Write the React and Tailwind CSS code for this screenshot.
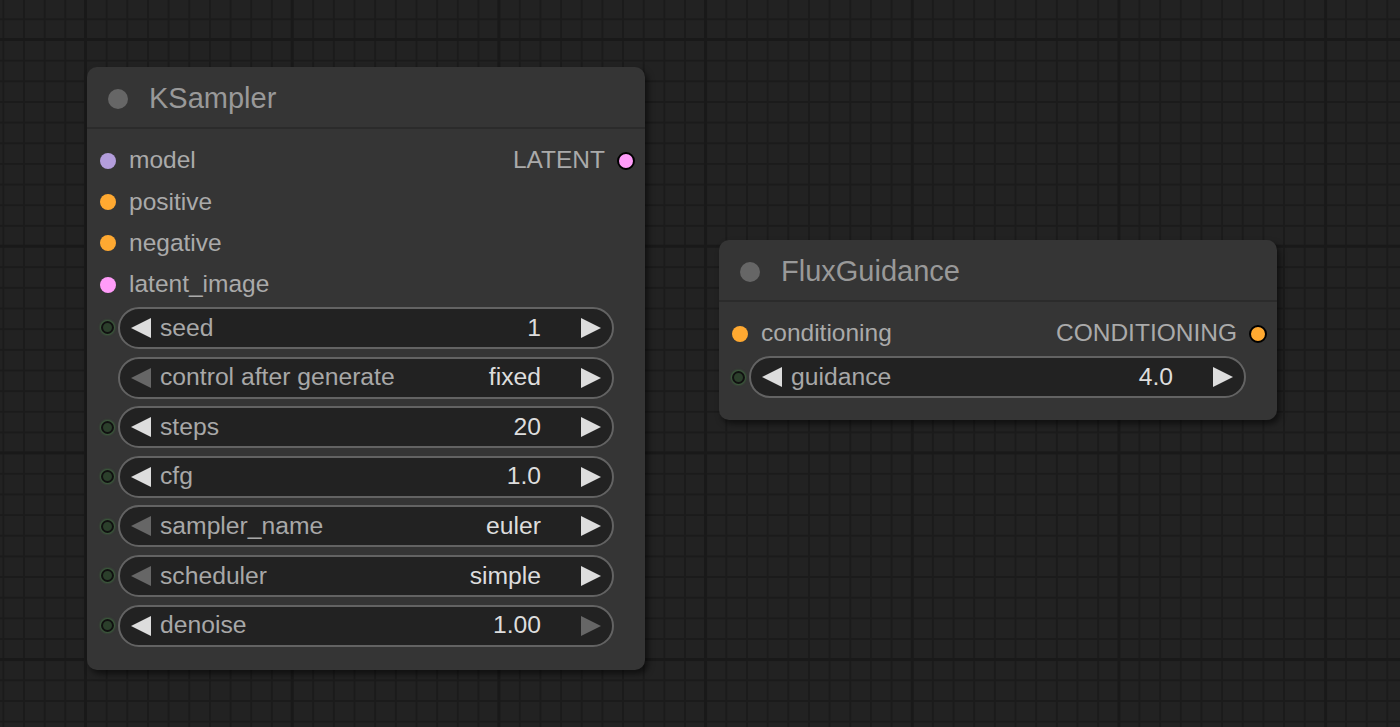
import React from 'react'

const font = { fontFamily: '"Liberation Sans", Arial, sans-serif' }

const ksInputs = [
  { name: 'model', color: 'bg-[#b39ddb]' },
  { name: 'positive', color: 'bg-[#ffa931]' },
  { name: 'negative', color: 'bg-[#ffa931]' },
  { name: 'latent_image', color: 'bg-[#ff9cf9]' },
]

const ksWidgets = [
  { name: 'seed', value: '1', dot: true, left: true, right: true },
  { name: 'control after generate', value: 'fixed', dot: false, left: false, right: true },
  { name: 'steps', value: '20', dot: true, left: true, right: true },
  { name: 'cfg', value: '1.0', dot: true, left: true, right: true },
  { name: 'sampler_name', value: 'euler', dot: true, left: false, right: true },
  { name: 'scheduler', value: 'simple', dot: true, left: false, right: true },
  { name: 'denoise', value: '1.00', dot: true, left: true, right: false },
]

function Arrow({ dir, active }) {
  return (
    <svg width="20" height="20" viewBox="0 0 20 20" className="shrink-0">
      <polygon
        points={dir === 'left' ? '20,0 20,20 0,10' : '0,0 0,20 20,10'}
        fill={active ? '#dddddd' : '#666666'}
      />
    </svg>
  )
}

function Widget({ w }) {
  return (
    <div className="relative h-[49.6px] flex items-center">
      {w.dot && (
        <div className="absolute left-[-17px] w-[13px] h-[13px] rounded-full border-2 border-[#111] bg-[#2b3f2b] shadow-[0_0_2px_1px_rgba(70,150,70,0.5)]" />
      )}
      <div className="w-full h-[42px] rounded-full border-2 border-[#636363] bg-[#222222] flex items-center pl-[11px] pr-[11px]">
        <Arrow dir="left" active={w.left} />
        <span className="ml-[9px] text-[24.7px] leading-none text-[#a8a8a8]">{w.name}</span>
        <span className="ml-auto text-[24.7px] leading-none text-[#dddddd]">{w.value}</span>
        <div className="ml-[40px]">
          <Arrow dir="right" active={w.right} />
        </div>
      </div>
    </div>
  )
}

function InputRow({ name, color, output }) {
  return (
    <div className="h-[41.3px] flex items-center">
      <div className={`w-4 h-4 rounded-full ${color} ml-[13px]`} />
      <span className="ml-[13px] text-[24.5px] leading-none text-[#aaaaaa]">{name}</span>
      {output && (
        <div className="ml-auto flex items-center mr-[10px]">
          <span className="text-[24.5px] leading-none text-[#aaaaaa]">{output.name}</span>
          <div className={`ml-[12px] w-[18px] h-[18px] rounded-full border-2 border-black ${output.color}`} />
        </div>
      )}
    </div>
  )
}

function Node({ title, className, children }) {
  return (
    <div
      className={`absolute w-[558px] rounded-[10px] bg-[#353535] shadow-[3px_4px_6px_rgba(0,0,0,0.55)] ${className}`}
    >
      <div className="h-[62px] pt-[3px] flex items-center border-b-2 border-[#2b2b2b]">
        <div className="ml-[21px] w-5 h-5 rounded-full bg-[#666666]" />
        <span className="ml-[21px] text-[29px] leading-none text-[#999999]">{title}</span>
      </div>
      {children}
    </div>
  )
}

export default function App() {
  return (
    <div
      style={font}
      className="relative w-[1400px] h-[727px] overflow-hidden bg-[#222222] bg-[linear-gradient(90deg,#191919_3px,transparent_3px),linear-gradient(#191919_3px,transparent_3px),linear-gradient(90deg,#1b1b1b_2px,transparent_2px),linear-gradient(#1b1b1b_2px,transparent_2px)] [background-size:206.7px_206.7px,206.7px_206.7px,20.67px_20.67px,20.67px_20.67px] [background-position:84px_38px,84px_38px,85px_39px,85px_39px]"
    >
      <Node title="KSampler" className="left-[87px] top-[67px] h-[603px]">
        <div className="pt-[11px]">
          {ksInputs.map((inp, i) => (
            <InputRow
              key={inp.name}
              name={inp.name}
              color={inp.color}
              output={i === 0 ? { name: 'LATENT', color: 'bg-[#ff9cf9]' } : null}
            />
          ))}
        </div>
        <div className="mt-[-2px] ml-[31px] mr-[31px]">
          {ksWidgets.map((w) => (
            <Widget key={w.name} w={w} />
          ))}
        </div>
      </Node>

      <Node title="FluxGuidance" className="left-[719px] top-[240px] h-[180px] w-[557px]">
        <div className="pt-[11px]">
          <InputRow
            name="conditioning"
            color="bg-[#ffa931]"
            output={{ name: 'CONDITIONING', color: 'bg-[#ffa931]' }}
          />
        </div>
        <div className="mt-[-2px] ml-[30px] mr-[31px]">
          <Widget w={{ name: 'guidance', value: '4.0', dot: true, left: true, right: true }} />
        </div>
      </Node>
    </div>
  )
}
